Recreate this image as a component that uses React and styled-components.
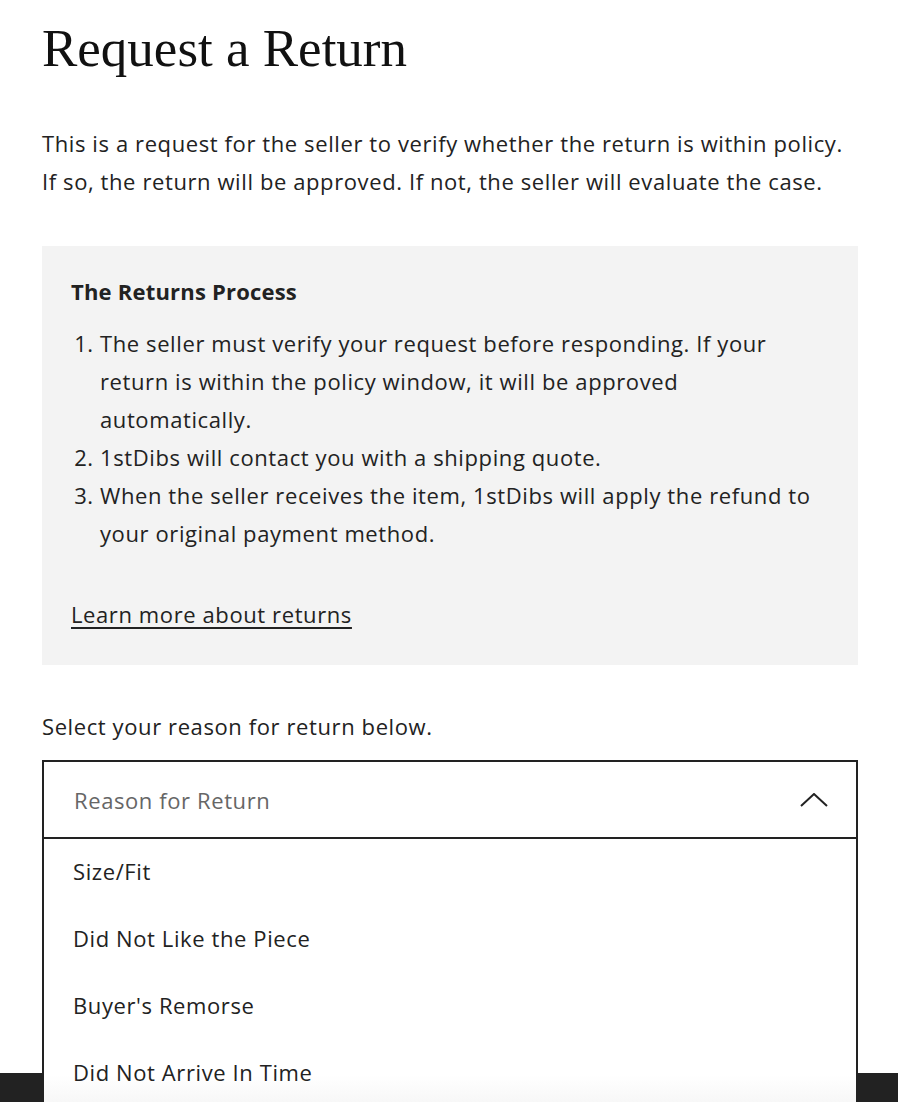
import React, { useState } from 'react';
import styled, { createGlobalStyle } from 'styled-components';

const GlobalStyle = createGlobalStyle`
  body {
    margin: 0;
    background: #fff;
    color: #222;
    font-family: "Open Sans", "Liberation Sans", sans-serif;
    letter-spacing: 0.6px;
  }
`;

const Page = styled.div`
  position: relative;
  height: 1102px;
  padding: 16px 40px 0 42px;
  box-sizing: border-box;
  overflow: hidden;
`;

const Title = styled.h1`
  font-family: "Liberation Serif", serif;
  font-weight: 400;
  font-size: 53px;
  line-height: 64px;
  letter-spacing: 0;
  margin: 0 0 44px;
  color: #111;
`;

const Intro = styled.p`
  font-size: 22px;
  line-height: 38px;
  margin: 0 0 46px;
`;

const InfoBox = styled.section`
  background: #f3f3f3;
  padding: 28px 29px 32px;
`;

const BoxTitle = styled.h2`
  font-size: 22px;
  font-weight: 700;
  line-height: 34px;
  letter-spacing: 0.2px;
  margin: 0 0 16px;
`;

const Steps = styled.ol`
  margin: 0 0 43px;
  padding-left: 29px;
  font-size: 22px;
  line-height: 38px;
`;

const LearnLink = styled.a`
  font-size: 22px;
  line-height: 38px;
  color: #222;
  text-decoration: underline;
  text-underline-offset: 4px;
`;

const Prompt = styled.p`
  font-size: 22px;
  line-height: 38px;
  margin: 42px 0 15px;
`;

const Select = styled.div`
  position: relative;
  z-index: 2;
`;

const Trigger = styled.button`
  display: flex;
  align-items: center;
  justify-content: space-between;
  width: 100%;
  height: 79px;
  padding: 0 28px 0 30px;
  background: #fff;
  border: 2px solid #222;
  font-family: inherit;
  font-size: 22px;
  letter-spacing: inherit;
  color: #666;
  cursor: pointer;
`;

const Menu = styled.ul`
  list-style: none;
  margin: 0;
  padding: 0;
  background: linear-gradient(#fff 0, #fff 88%, #f6f6f6 100%);
  border: 2px solid #222;
  border-top: none;
`;

const Option = styled.li`
  font-size: 22px;
  line-height: 34px;
  padding: 15px 29px 18px;
  color: #222;
`;

const FooterBar = styled.div`
  position: absolute;
  left: 0;
  right: 0;
  bottom: 0;
  height: 29px;
  background: #222;
  z-index: 1;
`;

const reasons = ['Size/Fit', 'Did Not Like the Piece', "Buyer's Remorse", 'Did Not Arrive In Time'];

export default function App() {
  const [open, setOpen] = useState(true);
  return (
    <>
      <GlobalStyle />
      <Page>
        <Title>Request a Return</Title>
        <Intro>
          This is a request for the seller to verify whether the return is within policy. If so, the
          return will be approved. If not, the seller will evaluate the case.
        </Intro>
        <InfoBox>
          <BoxTitle>The Returns Process</BoxTitle>
          <Steps>
            <li>
              The seller must verify your request before responding. If your return is within the
              policy window, it will be approved automatically.
            </li>
            <li>1stDibs will contact you with a shipping quote.</li>
            <li>
              When the seller receives the item, 1stDibs will apply the refund to your original
              payment method.
            </li>
          </Steps>
          <LearnLink href="#">Learn more about returns</LearnLink>
        </InfoBox>
        <Prompt>Select your reason for return below.</Prompt>
        <Select>
          <Trigger type="button" onClick={() => setOpen(!open)}>
            <span>Reason for Return</span>
            <svg width="28" height="14" viewBox="0 0 28 14" fill="none">
              <path d="M1 13L14 1L27 13" stroke="#222" strokeWidth="2" />
            </svg>
          </Trigger>
          {open && (
            <Menu>
              {reasons.map((r) => (
                <Option key={r}>{r}</Option>
              ))}
            </Menu>
          )}
        </Select>
        <FooterBar />
      </Page>
    </>
  );
}
